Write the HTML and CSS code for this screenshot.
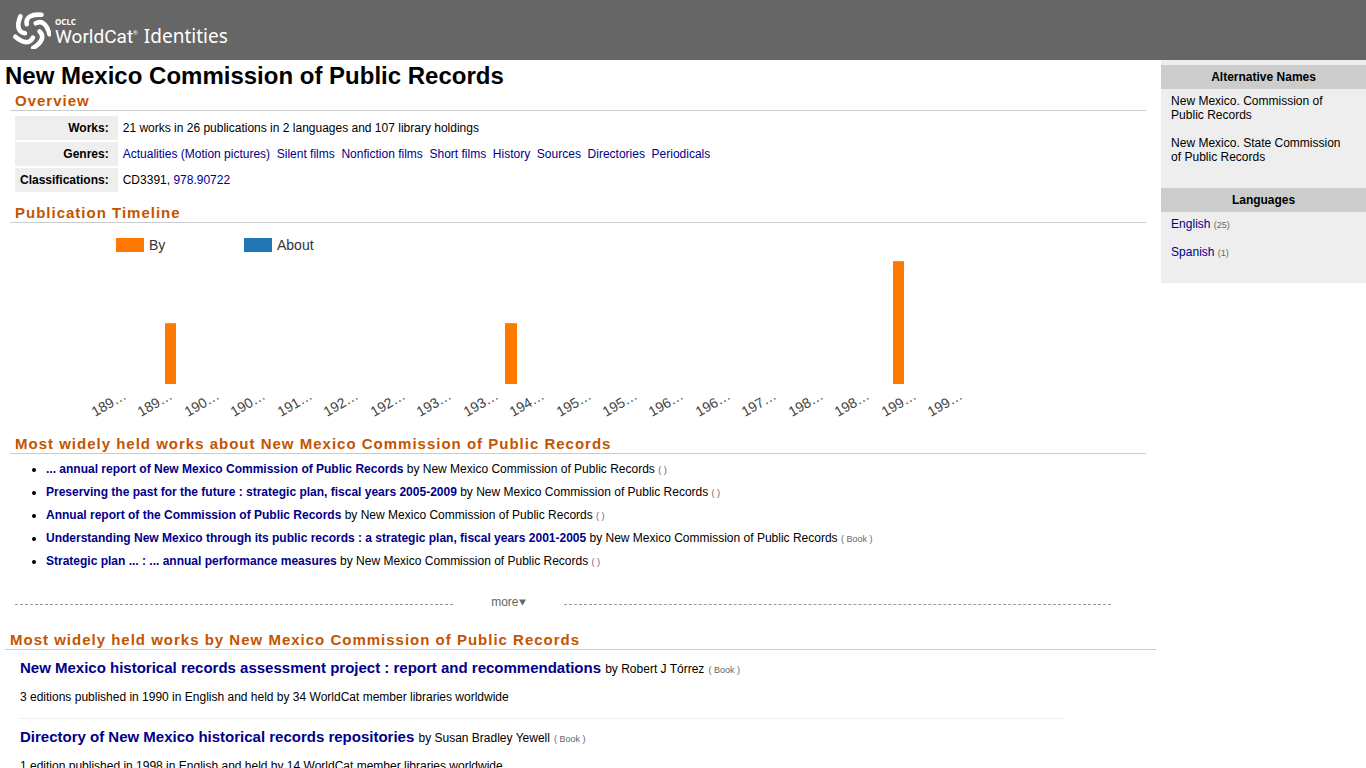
FILE: index.html
```html
<!DOCTYPE html>
<html lang="en">
<head>
<meta charset="utf-8">
<title>New Mexico Commission of Public Records - WorldCat Identities</title>
<link rel="stylesheet" href="styles.css">
</head>
<body>
<header class="banner">
  <svg class="logo" viewBox="-20 -20 40 40" aria-hidden="true">
    <g fill="none" stroke="#fff" stroke-width="4.800" stroke-linecap="round">
      <path d="M-5.500-6C-7-13-1-17 10-16"/>
      <path transform="rotate(72)" d="M-5.500-6C-7-13-1-17 10-16"/>
      <path transform="rotate(144)" d="M-5.500-6C-7-13-1-17 10-16"/>
      <path transform="rotate(216)" d="M-5.500-6C-7-13-1-17 10-16"/>
      <path transform="rotate(288)" d="M-5.500-6C-7-13-1-17 10-16"/>
    </g>
  </svg>
  <div class="brand"><span class="brand-owner">OCLC</span><span class="brand-name">WorldCat<sup>®</sup></span></div>
  <span class="brand-product">Identities</span>
</header>
<div class="page">
  <main class="main">
    <h1>New Mexico Commission of Public Records</h1>
    <section class="section">
      <h2>Overview</h2>
      <table class="overview">
        <tr><th scope="row">Works:</th><td>21 works in 26 publications in 2 languages and 107 library holdings</td></tr>
        <tr><th scope="row">Genres:</th><td><a href="#">Actualities (Motion pictures)</a>&nbsp; <a href="#">Silent films</a>&nbsp; <a href="#">Nonfiction films</a>&nbsp; <a href="#">Short films</a>&nbsp; <a href="#">History</a>&nbsp; <a href="#">Sources</a>&nbsp; <a href="#">Directories</a>&nbsp; <a href="#">Periodicals</a></td></tr>
        <tr><th scope="row">Classifications:</th><td>CD3391, <a href="#">978.90722</a></td></tr>
      </table>
    </section>
    <section class="section">
      <h2>Publication Timeline</h2>
      <svg class="chart" viewBox="0 0 960 204" width="960" height="204" role="img" aria-label="Publication timeline">
        <g class="legend">
          <rect class="by" x="101" y="15" width="28" height="14"/><text x="134" y="27">By</text>
          <rect class="about" x="229" y="15" width="28" height="14"/><text x="262" y="27">About</text>
        </g>
        <g class="bars">
          <rect class="by" x="150" y="100" width="11" height="61"/><rect class="cap" x="150" y="100" width="11" height="1"/>
          <rect class="by" x="490" y="100" width="12" height="61"/><rect class="cap" x="490" y="100" width="12" height="1"/>
          <rect class="by" x="878" y="38" width="11" height="123"/><rect class="cap" x="878" y="38" width="11" height="1"/>
        </g>
        <g class="years">
          <text transform="translate(80 194) rotate(-30)">189…</text>
          <text transform="translate(126 194) rotate(-30)">189…</text>
          <text transform="translate(173 194) rotate(-30)">190…</text>
          <text transform="translate(219 194) rotate(-30)">190…</text>
          <text transform="translate(266 194) rotate(-30)">191…</text>
          <text transform="translate(312 194) rotate(-30)">192…</text>
          <text transform="translate(359 194) rotate(-30)">192…</text>
          <text transform="translate(405 194) rotate(-30)">193…</text>
          <text transform="translate(452 194) rotate(-30)">193…</text>
          <text transform="translate(498 194) rotate(-30)">194…</text>
          <text transform="translate(545 194) rotate(-30)">195…</text>
          <text transform="translate(591 194) rotate(-30)">195…</text>
          <text transform="translate(637 194) rotate(-30)">196…</text>
          <text transform="translate(684 194) rotate(-30)">196…</text>
          <text transform="translate(730 194) rotate(-30)">197…</text>
          <text transform="translate(777 194) rotate(-30)">198…</text>
          <text transform="translate(823 194) rotate(-30)">198…</text>
          <text transform="translate(870 194) rotate(-30)">199…</text>
          <text transform="translate(916 194) rotate(-30)">199…</text>
        </g>
      </svg>
    </section>
    <section class="section">
      <h2>Most widely held works about New Mexico Commission of Public Records</h2>
      <ul class="about-list">
        <li><a href="#">... annual report of New Mexico Commission of Public Records</a> by New Mexico Commission of Public Records <small>( )</small></li>
        <li><a href="#">Preserving the past for the future : strategic plan, fiscal years 2005-2009</a> by New Mexico Commission of Public Records <small>( )</small></li>
        <li><a href="#">Annual report of the Commission of Public Records</a> by New Mexico Commission of Public Records <small>( )</small></li>
        <li><a href="#">Understanding New Mexico through its public records : a strategic plan, fiscal years 2001-2005</a> by New Mexico Commission of Public Records <small>( Book )</small></li>
        <li><a href="#">Strategic plan ... : ... annual performance measures</a> by New Mexico Commission of Public Records <small>( )</small></li>
      </ul>
      <div class="more-row">
        <span class="dash dash-left"></span>
        <button class="more" type="button">more<svg viewBox="0 0 7 7" aria-hidden="true"><path d="M0 0.500h7L3.500 6.500z"/></svg></button>
        <span class="dash dash-right"></span>
      </div>
    </section>
    <section class="section held-by">
      <h2>Most widely held works by New Mexico Commission of Public Records</h2>
      <article class="work">
        <h3><a href="#">New Mexico historical records assessment project : report and recommendations</a> <span>by Robert J Tórrez</span> <small>( Book )</small></h3>
        <p>3 editions published in 1990 in English and held by 34 WorldCat member libraries worldwide</p>
      </article>
      <article class="work">
        <h3><a href="#">Directory of New Mexico historical records repositories</a> <span>by Susan Bradley Yewell</span> <small>( Book )</small></h3>
        <p>1 edition published in 1998 in English and held by 14 WorldCat member libraries worldwide</p>
      </article>
    </section>
  </main>
  <aside class="side">
    <h2>Alternative Names</h2>
    <div class="side-body">
      <p>New Mexico. Commission of Public Records</p>
      <p>New Mexico. State Commission of Public Records</p>
    </div>
    <h2>Languages</h2>
    <div class="side-body">
      <p><a href="#">English</a> <small>(25)</small></p>
      <p><a href="#">Spanish</a> <small>(1)</small></p>
    </div>
  </aside>
</div>
</body>
</html>
```
FILE: styles.css
```css
* { box-sizing: border-box; }
body {
  margin: 0;
  height: 100vh;
  overflow: hidden;
  background: #fff;
  color: #000;
  font: 12px/14px "Liberation Sans", Arial, sans-serif;
}
a { color: #00008b; text-decoration: none; }
small { font-size: 9px; line-height: 1px; color: #666; }

.banner {
  display: flex;
  align-items: flex-start;
  height: 60px;
  padding: 11px 13px;
  background: #666;
  color: #fff;
  font-family: "Noto Sans", sans-serif;
}
.logo { width: 38px; height: 38px; flex: none; }
.brand { display: flex; flex-direction: column; padding: 5px 0 0 4px; }
.brand-owner { font-size: 8px; font-weight: 700; line-height: 11px; }
.brand-name { font-family: Roboto, sans-serif; font-size: 19px; line-height: 20px; }
.brand-name sup { font-size: 6px; line-height: 1px; vertical-align: 8px; }
.brand-product { padding: 15px 0 0 6px; font-size: 19px; line-height: 20px; }

.page { display: flex; align-items: flex-start; }
.main { flex: 1; min-width: 0; padding: 0 5px; }
h1 { margin: 0; padding-top: 2px; font-size: 24px; line-height: 28px; }
.section { margin: 0 10px 0 5px; }
.section h2 {
  margin: 0;
  padding: 2px 5px 0;
  border-bottom: 1px solid #ccc;
  color: #c45500;
  font-size: 15px;
  line-height: 18px;
  letter-spacing: 1px;
}

.overview { margin: 3px 0 8px 3px; border-spacing: 2px; border-collapse: separate; }
.overview th { padding: 5px 9px 5px 5px; background: #eee; text-align: right; }
.overview td { padding: 5px 3px; }
.overview th, .overview td { height: 24px; line-height: 14px; }

.chart { display: block; margin: 0 0 6px 5px; max-width: 100%; font-family: "Liberation Sans", Arial, sans-serif; }
.by { fill: #ff7800; }
.about { fill: #2077b4; }
.cap { fill: #b9a08c; }
.legend text { font-size: 14px; fill: #333; }
.years text { font-size: 14px; fill: #444; }

.about-list { margin: 8px 0 0; padding-left: 36px; }
.about-list li { padding-bottom: 9px; }
.about-list a { font-weight: 700; }

.more-row { display: flex; align-items: center; padding: 18px 35px 0 5px; }
.dash { height: 0; border-top: 1px dashed #999; }
.dash-left { flex: 4; }
.dash-right { flex: 5; }
.more { width: 111px; border: 0; padding: 0 0 4px; background: none; color: #666; font: inherit; }
.more svg { width: 7px; height: 7px; fill: #666; }

.held-by { margin: 16px 0 0; }
.work { margin: 0 91px 0 15px; padding: 9px 0 14px; border-bottom: 1px solid #eee; }
.work h3 { margin: 0; font-size: 15px; line-height: 18px; }
.work h3 span { font-size: 12px; font-weight: 400; line-height: 1px; }
.work h3 small { font-weight: 400; }
.work p { margin: 13px 0 0; }

.side { width: 15%; padding-top: 5px; background: #eee; }
.side h2 { margin: 0; padding: 5px; background: #ccc; font-size: 12px; line-height: 14px; text-align: center; }
.side-body { padding: 5px 20px 10px 10px; }
.side-body p { margin: 0 0 14px; }
```
